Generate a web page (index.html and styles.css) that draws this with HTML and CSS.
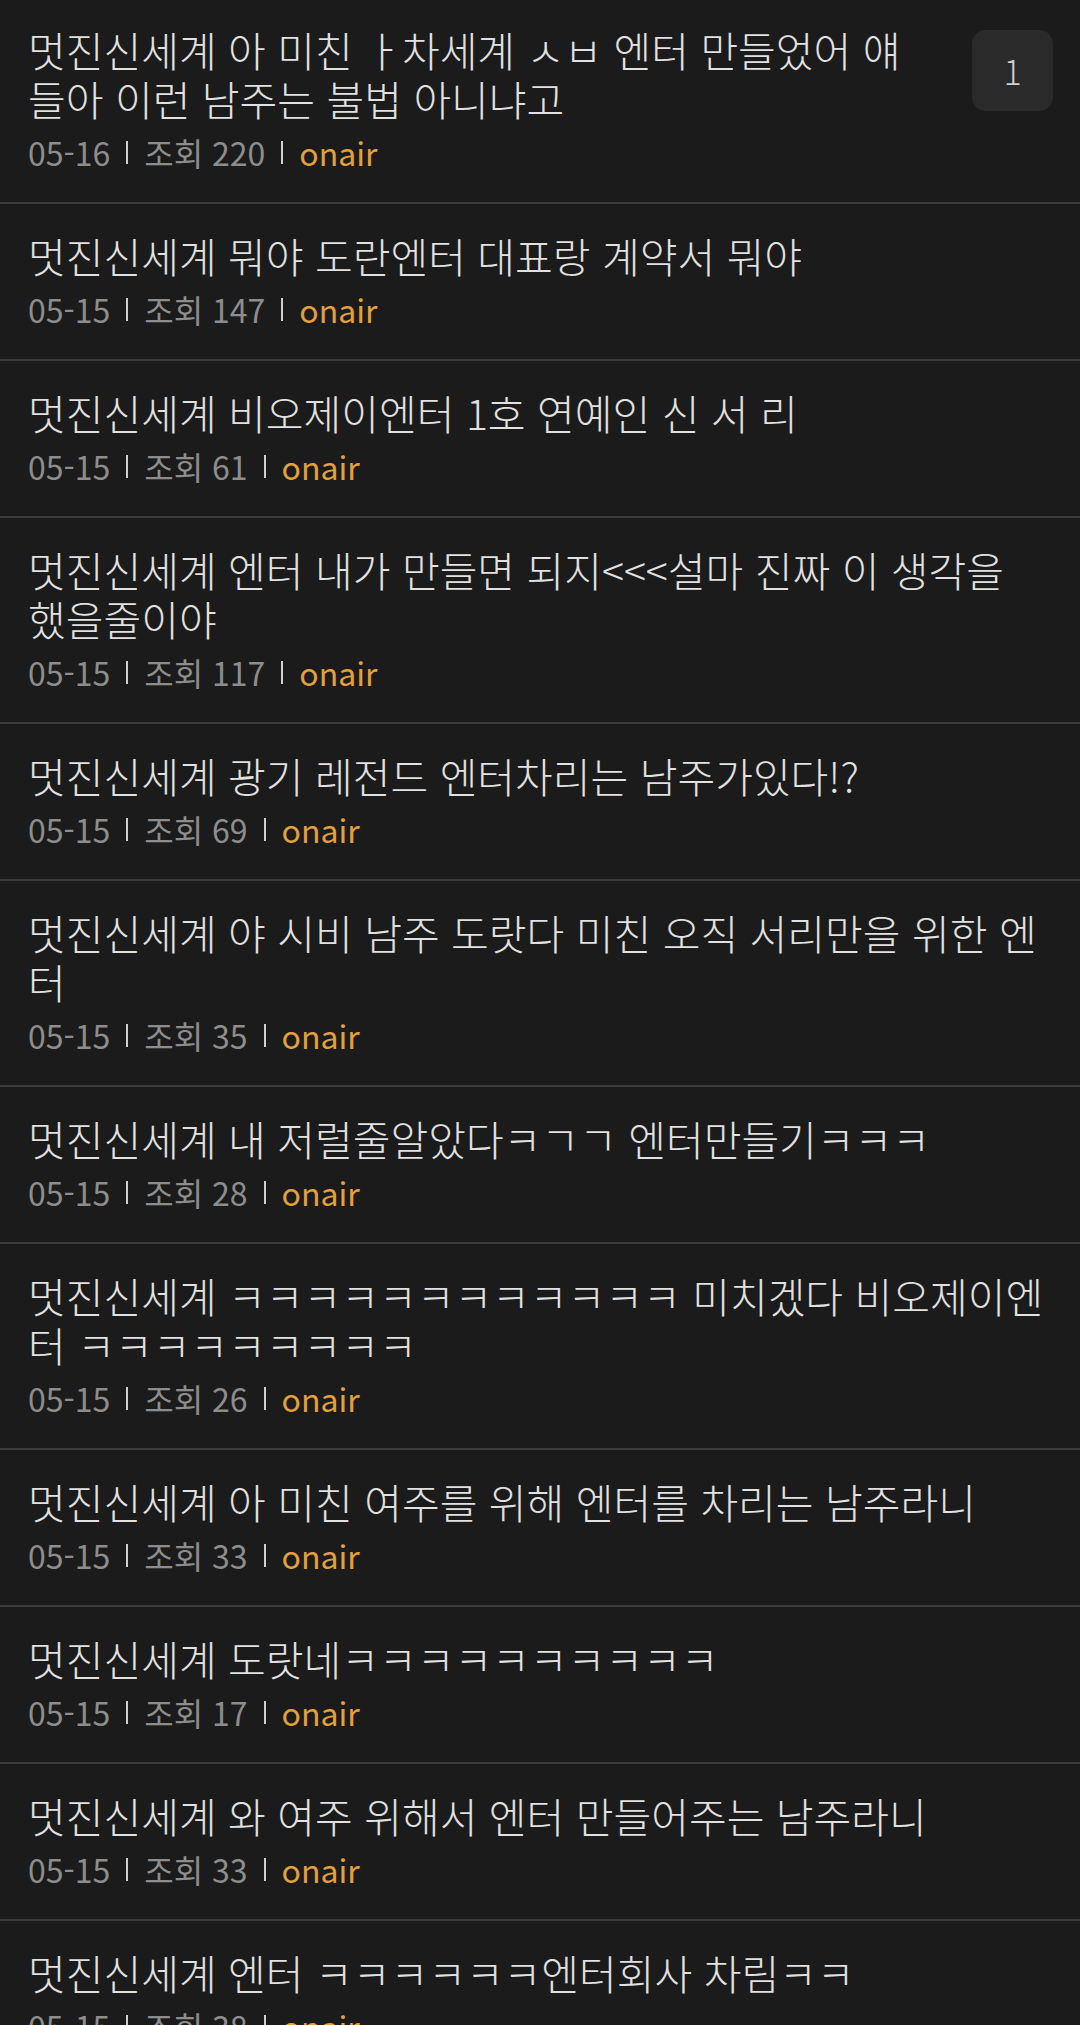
FILE: index.html
```html
<!DOCTYPE html>
<html lang="ko">
<head>
  <meta charset="UTF-8" />
  <title>멋진신세계 - onair</title>
  <link rel="stylesheet" href="styles.css">
</head>
<body>
  <ul class="list">
    <li class="item">
      <div class="item-body">
        <p class="title">멋진신세계 아 미친 ㅏ차세계 ㅅㅂ 엔터 만들었어 얘들아 이런 남주는 불법 아니냐고</p>
        <div class="meta"><span>05-16</span><i class="bar"></i><span>조회 220</span><i class="bar"></i><span class="board">onair</span></div>
      </div>
      <span class="count">1</span>
    </li>
    <li class="item">
      <div class="item-body">
        <p class="title">멋진신세계 뭐야 도란엔터 대표랑 계약서 뭐야</p>
        <div class="meta"><span>05-15</span><i class="bar"></i><span>조회 147</span><i class="bar"></i><span class="board">onair</span></div>
      </div>
    </li>
    <li class="item">
      <div class="item-body">
        <p class="title">멋진신세계 비오제이엔터 1호 연예인 신 서 리</p>
        <div class="meta"><span>05-15</span><i class="bar"></i><span>조회 61</span><i class="bar"></i><span class="board">onair</span></div>
      </div>
    </li>
    <li class="item">
      <div class="item-body">
        <p class="title">멋진신세계 엔터 내가 만들면 되지&lt;&lt;&lt;설마 진짜 이 생각을 했을줄이야</p>
        <div class="meta"><span>05-15</span><i class="bar"></i><span>조회 117</span><i class="bar"></i><span class="board">onair</span></div>
      </div>
    </li>
    <li class="item">
      <div class="item-body">
        <p class="title">멋진신세계 광기 레전드 엔터차리는 남주가있다!?</p>
        <div class="meta"><span>05-15</span><i class="bar"></i><span>조회 69</span><i class="bar"></i><span class="board">onair</span></div>
      </div>
    </li>
    <li class="item">
      <div class="item-body">
        <p class="title">멋진신세계 야 시비 남주 도랏다 미친 오직 서리만을 위한 엔터</p>
        <div class="meta"><span>05-15</span><i class="bar"></i><span>조회 35</span><i class="bar"></i><span class="board">onair</span></div>
      </div>
    </li>
    <li class="item">
      <div class="item-body">
        <p class="title">멋진신세계 내 저럴줄알았다ㅋㄱㄱ 엔터만들기ㅋㅋㅋ</p>
        <div class="meta"><span>05-15</span><i class="bar"></i><span>조회 28</span><i class="bar"></i><span class="board">onair</span></div>
      </div>
    </li>
    <li class="item">
      <div class="item-body">
        <p class="title">멋진신세계 ㅋㅋㅋㅋㅋㅋㅋㅋㅋㅋㅋㅋ 미치겠다 비오제이엔터 ㅋㅋㅋㅋㅋㅋㅋㅋㅋ</p>
        <div class="meta"><span>05-15</span><i class="bar"></i><span>조회 26</span><i class="bar"></i><span class="board">onair</span></div>
      </div>
    </li>
    <li class="item">
      <div class="item-body">
        <p class="title">멋진신세계 아 미친 여주를 위해 엔터를 차리는 남주라니</p>
        <div class="meta"><span>05-15</span><i class="bar"></i><span>조회 33</span><i class="bar"></i><span class="board">onair</span></div>
      </div>
    </li>
    <li class="item">
      <div class="item-body">
        <p class="title">멋진신세계 도랏네ㅋㅋㅋㅋㅋㅋㅋㅋㅋㅋ</p>
        <div class="meta"><span>05-15</span><i class="bar"></i><span>조회 17</span><i class="bar"></i><span class="board">onair</span></div>
      </div>
    </li>
    <li class="item">
      <div class="item-body">
        <p class="title">멋진신세계 와 여주 위해서 엔터 만들어주는 남주라니</p>
        <div class="meta"><span>05-15</span><i class="bar"></i><span>조회 33</span><i class="bar"></i><span class="board">onair</span></div>
      </div>
    </li>
    <li class="item">
      <div class="item-body">
        <p class="title">멋진신세계 엔터 ㅋㅋㅋㅋㅋㅋ엔터회사 차림ㅋㅋ</p>
        <div class="meta"><span>05-15</span><i class="bar"></i><span>조회 38</span><i class="bar"></i><span class="board">onair</span></div>
      </div>
    </li>
  </ul>
</body>
</html>
```

FILE: styles.css
```css
body {
  margin: 0;
  background-color: #1b1b1b;
  font-family: "Noto Sans CJK KR", "Noto Sans", sans-serif;
  color: #e1e1e1;
}
.list {
  list-style: none;
  margin: 0;
  padding: 0;
}
.item {
  display: flex;
  align-items: flex-start;
  gap: 54px;
  padding: 27px 28px 30px;
  border-bottom: 2px solid #3b3b3b;
}
.item:first-child {
  padding-top: 25px;
}
.item-body {
  flex: 1;
  min-width: 0;
}
.title {
  margin: 0 0 9px;
  font-size: 41px;
  font-weight: 300;
  line-height: 49px;
}
.meta {
  display: flex;
  align-items: center;
  gap: 16px;
  font-size: 32px;
  line-height: 40px;
  color: #8d8d8d;
}
.bar {
  width: 2px;
  height: 23px;
  background-color: #cfcfcf;
}
.board {
  color: #e3a03b;
}
.count {
  flex: none;
  display: flex;
  align-items: center;
  justify-content: center;
  width: 81px;
  height: 81px;
  margin-top: 5px;
  margin-right: -1px;
  border-radius: 14px;
  background-color: #2a2a2a;
  font-size: 34px;
  font-weight: 300;
  color: #cfcfcf;
}
```
